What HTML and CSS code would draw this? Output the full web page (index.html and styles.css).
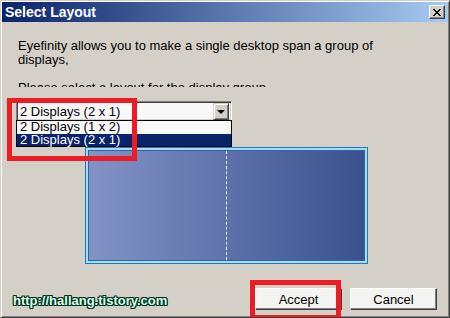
FILE: index.html
```html
<!DOCTYPE html>
<html lang="en">
<head>
    <meta charset="UTF-8">
    <title>Select Layout</title>
    <link rel="stylesheet" href="styles.css">
</head>
<body>

    <div class="window">
        <!-- Title Bar -->
        <div class="titlebar">
            <span class="title">Select Layout</span>
            <button class="close-btn" aria-label="Close">
                <svg width="8" height="7" viewBox="0 0 8 7">
                    <path d="M0 0h2v1h1v1h2V1h1V0h2v1H7v1H6v1H5v1h1v1h1v1h1v1H6V6H5V5H3v1H2v1H0V6h1V5h1V4h1V3H2V2H1V1H0z" fill="#000"/>
                </svg>
            </button>
        </div>

        <div class="content">
            <!-- Description -->
            <div class="intro">
                Eyefinity allows you to make a single desktop span a group of<br>
                displays,<br>
                <br>
                Please select a layout for the display group
            </div>

            <!-- Layout Select -->
            <div class="combo">
                <div class="combo-value">2 Displays (2 x 1)</div>
                <div class="combo-arrow"><span class="arrow"></span></div>
                <ul class="combo-list">
                    <li>2 Displays (1 x 2)</li>
                    <li class="selected">2 Displays (2 x 1)</li>
                </ul>
            </div>

            <!-- Preview -->
            <div class="preview">
                <div class="preview-inner">
                    <div class="screen screen-left"></div>
                    <div class="screen"></div>
                </div>
            </div>

            <!-- Footer -->
            <div class="footer">
                <span class="watermark">http://hallang.tistory.com</span>
                <div class="buttons">
                    <button class="btn">Accept</button>
                    <button class="btn">Cancel</button>
                </div>
            </div>
        </div>

        <!-- Highlight marks -->
        <div class="mark mark-combo"></div>
        <div class="mark mark-accept"></div>
    </div>

</body>
</html>
```

FILE: styles.css
```css
body {
    margin: 0;
    font-family: "Liberation Sans", Arial, sans-serif;
    font-size: 13px;
    color: #000;
}

.window {
    position: relative;
    width: 450px;
    height: 318px;
    box-sizing: border-box;
    padding: 1px;
    background-color: #d4d0c8;
    border: 1px solid;
    border-color: #d4d0c8 #404040 #404040 #d4d0c8;
    box-shadow: inset 1px 1px #fff, inset -1px -1px #808080;
    overflow: hidden;
}

.titlebar {
    height: 20px;
    display: flex;
    align-items: center;
    justify-content: space-between;
    padding: 0 3px 0 3px;
    background: linear-gradient(to right, #0a246a, #a6caf0);
}

.title {
    color: #fff;
    font-weight: bold;
    font-size: 14px;
}

.close-btn {
    width: 16px;
    height: 14px;
    padding: 0;
    display: flex;
    align-items: center;
    justify-content: center;
    background-color: #d4d0c8;
    border: 1px solid;
    border-color: #fff #404040 #404040 #fff;
    box-shadow: inset -1px -1px #808080;
}

.content {
    padding: 0 11px 0 14px;
}

.intro {
    margin-top: 17px;
    padding-left: 2px;
    height: 48px;
    line-height: 14px;
    overflow: hidden;
}

.combo {
    position: relative;
    width: 216px;
    height: 20px;
    margin-top: 14px;
    box-sizing: border-box;
    display: flex;
    background-color: #f8f8f8;
    border: 1px solid;
    border-color: #808080 #fff #fff #808080;
    box-shadow: inset 1px 1px #404040, inset -1px -1px #d4d0c8;
    padding: 1px 2px 2px 2px;
}

.combo-value {
    flex: 1;
    line-height: 17px;
    padding-left: 1px;
}

.combo-arrow {
    width: 16px;
    height: 17px;
    box-sizing: border-box;
    display: flex;
    align-items: center;
    justify-content: center;
    background-color: #d4d0c8;
    border: 1px solid;
    border-color: #d4d0c8 #404040 #404040 #d4d0c8;
    box-shadow: inset 1px 1px #fff, inset -1px -1px #808080;
}

.arrow {
    width: 0;
    height: 0;
    border-left: 4px solid transparent;
    border-right: 4px solid transparent;
    border-top: 4px solid #000;
}

.combo-list {
    position: absolute;
    left: -1px;
    top: 18px;
    width: 216px;
    margin: 0;
    padding: 0;
    list-style: none;
    box-sizing: border-box;
    background-color: #f8f8f8;
    border: 1px solid #000;
    z-index: 2;
}

.combo-list li {
    height: 12.5px;
    line-height: 12.5px;
    padding-left: 3px;
}

.combo-list .selected {
    background-color: #0a246a;
    color: #fff;
}

.preview {
    width: 283px;
    height: 117px;
    margin: 26px 0 0 69px;
    box-sizing: border-box;
    padding: 2px;
    background-color: #a8daf4;
    border: 1px solid #1b7bc4;
}

.preview-inner {
    height: 100%;
    box-sizing: border-box;
    display: flex;
    border: 1px solid #2a66aa;
    background: linear-gradient(to right, #8293c6, #3a518e);
}

.screen {
    flex: 1;
}

.screen-left {
    border-right: 1px dashed #e4ecff;
}

.footer {
    display: flex;
    align-items: center;
    justify-content: space-between;
    margin-top: 24px;
}

.watermark {
    margin-left: -3px;
    margin-top: 2px;
    font-weight: bold;
    font-size: 13px;
    color: #dcfff0;
    text-shadow: 1px 0 #00331a, -1px 0 #00331a, 0 1px #00331a, 0 -1px #00331a,
                 1px 1px #00331a, -1px -1px #00331a, 1px -1px #00331a, -1px 1px #00331a;
}

.buttons {
    display: flex;
    gap: 8px;
}

.btn {
    width: 87px;
    height: 22px;
    padding: 0;
    font-family: "Liberation Sans", Arial, sans-serif;
    font-size: 13px;
    color: #000;
    background-color: #f4f4f2;
    border: 1px solid;
    border-color: #fff #404040 #404040 #fff;
    box-shadow: inset -1px -1px #808080;
}

.mark {
    position: absolute;
    border: 5px solid #ed1c24;
    box-sizing: border-box;
    z-index: 3;
}

.mark-combo {
    left: 6px;
    top: 97px;
    width: 130px;
    height: 63px;
}

.mark-accept {
    left: 249px;
    top: 279px;
    width: 91px;
    height: 40px;
}
```
